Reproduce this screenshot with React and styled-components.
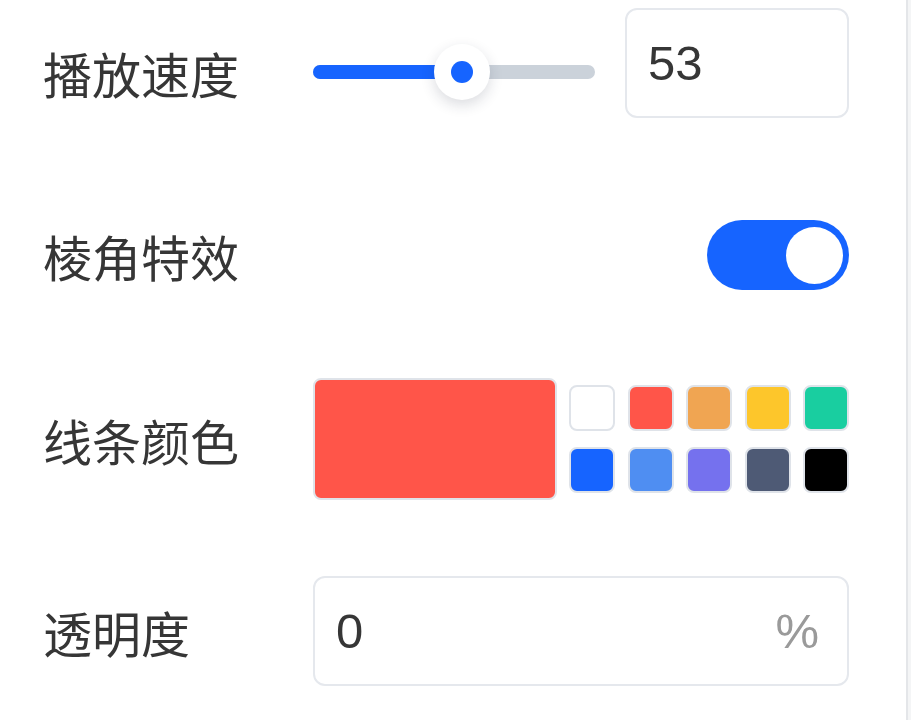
import React from "react";
import styled, { createGlobalStyle } from "styled-components";

const GlobalStyle = createGlobalStyle`
    html, body {
        margin: 0;
        padding: 0;
        background: #ffffff;
    }
    body {
        font-family: "Liberation Sans", "Noto Sans CJK SC", sans-serif;
    }
`;

const swatches = [
    "#ffffff", "#ff5549", "#f0a552", "#fdc62b", "#19cea0",
    "#1664ff", "#4f8ef2", "#7571ee", "#4e5a75", "#000000",
];

const speed = 53;

const App = () => {
    return (
        <Page>
            <GlobalStyle />
            <Panel>
                <Row>
                    <Label>播放速度</Label>
                    <Slider>
                        <Track>
                            <Fill style={{ width: `${speed}%` }} />
                            <Thumb style={{ left: `${speed}%` }}>
                                <Dot />
                            </Thumb>
                        </Track>
                    </Slider>
                    <NumberBox $raised>
                        <Value>{speed}</Value>
                    </NumberBox>
                </Row>

                <Row $gap={84}>
                    <Label>棱角特效</Label>
                    <Spacer />
                    <Switch>
                        <Knob />
                    </Switch>
                </Row>

                <Row $gap={88}>
                    <Label>线条颜色</Label>
                    <Current color="#ff5549" />
                    <Palette>
                        {swatches.map((c) => (
                            <Swatch key={c} color={c} />
                        ))}
                    </Palette>
                </Row>

                <Row $gap={76}>
                    <Label>透明度</Label>
                    <NumberBox $wide>
                        <Value>0</Value>
                        <Suffix>%</Suffix>
                    </NumberBox>
                </Row>
            </Panel>
            <Edge />
        </Page>
    );
};

const Page = styled.div`
    display: flex;
    width: 911px;
    height: 720px;
    overflow: hidden;
`;

const Panel = styled.div`
    flex: none;
    width: 906px;
    box-sizing: border-box;
    padding: 8px 57px 0 43px;
    display: flex;
    flex-direction: column;
`;

const Edge = styled.div`
    flex: 1;
    border-left: 2px solid #e4e6e9;
    background: #f4f5f6;
`;

const Row = styled.div`
    display: flex;
    align-items: center;
    margin-top: ${(p) => p.$gap || 0}px;
`;

const Label = styled.div`
    flex: none;
    width: 270px;
    font-size: 49px;
    line-height: 1;
    color: #363636;
    font-family: "Noto Sans CJK SC", sans-serif;
`;

const Spacer = styled.div`
    flex: 1;
`;

const Slider = styled.div`
    width: 282px;
    flex: none;
    margin-right: 30px;
    padding: 20px 0;
`;

const Track = styled.div`
    position: relative;
    height: 14px;
    border-radius: 7px;
    background: #cbd2da;
`;

const Fill = styled.div`
    height: 100%;
    border-radius: 7px;
    background: #1664ff;
`;

const Thumb = styled.div`
    position: absolute;
    top: 50%;
    width: 56px;
    height: 56px;
    margin: -28px 0 0 -28px;
    border-radius: 50%;
    background: #ffffff;
    box-shadow: 0 5px 14px rgba(30, 40, 60, 0.16);
    display: flex;
    align-items: center;
    justify-content: center;
`;

const Dot = styled.div`
    width: 22px;
    height: 22px;
    border-radius: 50%;
    background: #1664ff;
`;

const NumberBox = styled.div`
    flex: ${(p) => (p.$wide ? "1" : "none")};
    width: ${(p) => (p.$wide ? "auto" : "224px")};
    height: 110px;
    box-sizing: border-box;
    margin-bottom: ${(p) => (p.$raised ? "18px" : "0")};
    border: 2px solid #e5e8ed;
    border-radius: 12px;
    background: #ffffff;
    display: flex;
    align-items: center;
    padding: 0 28px 0 21px;
`;

const Value = styled.span`
    flex: 1;
    font-size: 49px;
    color: #363636;
`;

const Suffix = styled.span`
    font-size: 49px;
    color: #9a9a9a;
`;

const Switch = styled.div`
    width: 142px;
    height: 70px;
    box-sizing: border-box;
    border-radius: 35px;
    background: #1664ff;
    display: flex;
    align-items: center;
    justify-content: flex-end;
    padding: 0 6px;
`;

const Knob = styled.div`
    width: 57px;
    height: 57px;
    border-radius: 50%;
    background: #ffffff;
`;

const Current = styled.div`
    flex: none;
    width: 244px;
    height: 122px;
    box-sizing: border-box;
    border: 2px solid #dfe3e9;
    border-radius: 8px;
    background: ${(p) => p.color};
    margin-right: 12px;
`;

const Palette = styled.div`
    flex: 1;
    display: grid;
    grid-template-columns: repeat(5, 46px);
    justify-content: space-between;
    row-gap: 16px;
`;

const Swatch = styled.div`
    height: 46px;
    box-sizing: border-box;
    border: 2px solid #dfe3e9;
    border-radius: 8px;
    background: ${(p) => p.color};
`;

export default App;
